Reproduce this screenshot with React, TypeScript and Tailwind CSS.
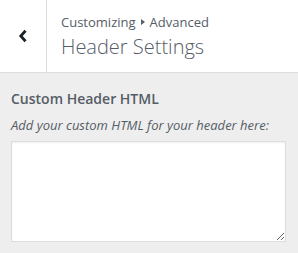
import React from "react";

export default function App() {
  return (
    <div className="w-[298px] h-[253px] bg-[#eeeeee] overflow-hidden" style={{ fontFamily: '"Open Sans", sans-serif' }}>
      <div className="flex h-[73px] bg-white border-b border-[#dddddd]">
        <div className="w-[47px] h-full border-r border-[#dddddd] flex items-center justify-center">
          <svg width="12" height="14" viewBox="0 0 12 14" className="ml-[-1px] mt-[-1px]">
            <path d="M8.5 1.8 L3.8 7 L8.5 12.2" fill="none" stroke="#1d2327" strokeWidth="2.8" strokeLinecap="butt" strokeLinejoin="miter" />
          </svg>
        </div>
        <div className="pl-[14px] pt-[10px]">
          <div className="text-[13px] leading-[24px] text-[#555d66] flex items-center">
            <span>Customizing</span>
            <svg width="8" height="8" viewBox="0 0 8 8" className="mx-[3px]">
              <path d="M2 1 L6 4 L2 7 Z" fill="#555d66" />
            </svg>
            <span>Advanced</span>
          </div>
          <div className="text-[20px] leading-[26px] text-[#555d66] font-light">Header Settings</div>
        </div>
      </div>
      <div className="pl-[11px] pr-[12px] pt-[14px]">
        <div className="text-[14px] leading-[24px] font-semibold text-[#555d66]">Custom Header HTML</div>
        <div className="text-[13px] leading-[24px] italic text-[#555d66] mt-[2px]">Add your custom HTML for your header here:</div>
        <textarea className="block w-[275px] h-[101px] mt-[4px] bg-white border border-[#dddddd] shadow-[inset_0_1px_2px_rgba(0,0,0,0.07)] outline-none resize" />
      </div>
    </div>
  );
}
